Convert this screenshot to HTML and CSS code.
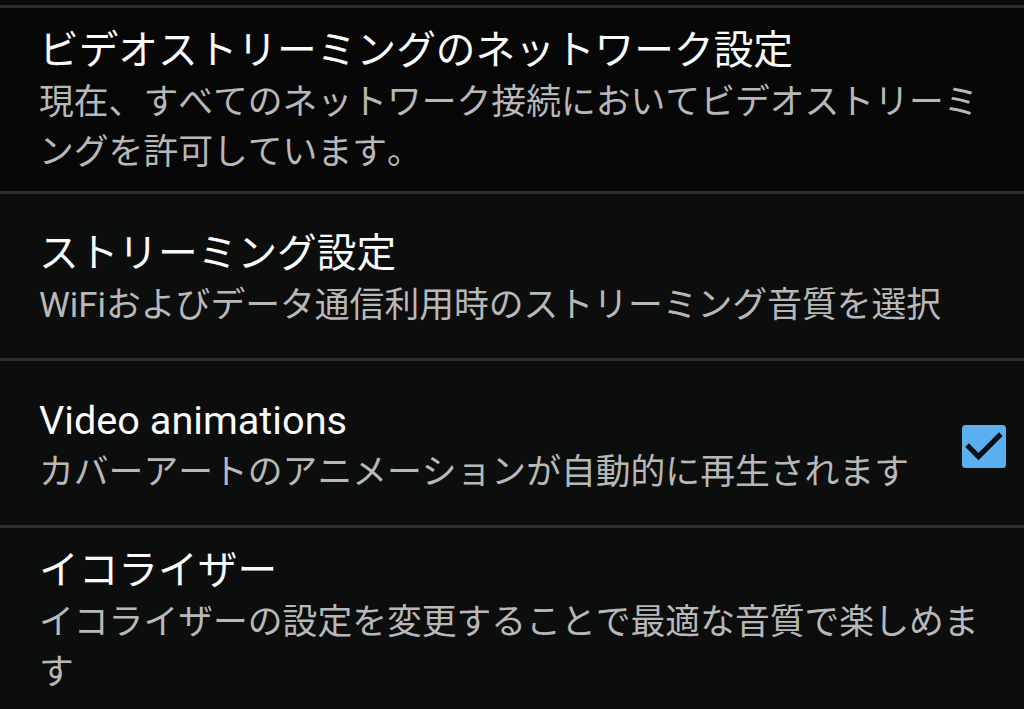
FILE: index.html
```html
<!DOCTYPE html>
<html lang="ja">
<head>
<meta charset="utf-8">
<title>設定</title>
<link rel="stylesheet" href="styles.css">
</head>
<body>
<div class="list">
  <div class="top-strip"></div>
  <div class="row row-first">
    <div class="text">
      <div class="title">ビデオストリーミングのネットワーク設定</div>
      <div class="summary">現在、すべてのネットワーク接続においてビデオストリーミングを許可しています。</div>
    </div>
  </div>
  <div class="row row-tall">
    <div class="text">
      <div class="title">ストリーミング設定</div>
      <div class="summary">WiFiおよびデータ通信利用時のストリーミング音質を選択</div>
    </div>
  </div>
  <div class="row row-tall row-check">
    <div class="text">
      <div class="title">Video animations</div>
      <div class="summary">カバーアートのアニメーションが自動的に再生されます</div>
    </div>
    <div class="checkbox">
      <svg width="44" height="43" viewBox="0 0 44 43" aria-hidden="true">
        <rect x="0" y="0" width="44" height="43" rx="3.5" fill="#5aaff1"/>
        <path d="M7 22 L16.5 31.5 L37 11" fill="none" stroke="#0c0d0d" stroke-width="5.2" stroke-linecap="square" stroke-linejoin="miter"/>
      </svg>
    </div>
  </div>
  <div class="row row-last">
    <div class="text">
      <div class="title">イコライザー</div>
      <div class="summary">イコライザーの設定を変更することで最適な音質で楽しめます</div>
    </div>
  </div>
</div>
</body>
</html>
```
FILE: styles.css
```css
html, body {
  margin: 0;
  padding: 0;
  background: #0c0d0d;
}
body {
  width: 1024px;
  height: 709px;
  overflow: hidden;
  font-family: Roboto, "Noto Sans CJK JP", sans-serif;
  font-kerning: none;
}
.list {
  display: flex;
  flex-direction: column;
}
.top-strip {
  height: 5px;
  background: #0b0b0b;
}
.row {
  display: flex;
  align-items: center;
  border-top: 3px solid #2c2d2d;
  padding: 17px 30px 14px 39px;
  box-sizing: border-box;
}
.row-first {
  background: #070707;
}
.row-tall {
  min-height: 167px;
  padding-top: 20px;
  padding-bottom: 14px;
}
.row-check {
  padding-right: 18px;
}
.text {
  flex: 1;
  min-width: 0;
}
.title {
  font-size: 39.7px;
  line-height: 52px;
  color: #fafafa;
  white-space: nowrap;
}
.summary {
  font-size: 34.8px;
  line-height: 50px;
  color: #b8b8b8;
}
.checkbox {
  width: 44px;
  height: 43px;
  flex: none;
}
.checkbox svg {
  display: block;
}
```
